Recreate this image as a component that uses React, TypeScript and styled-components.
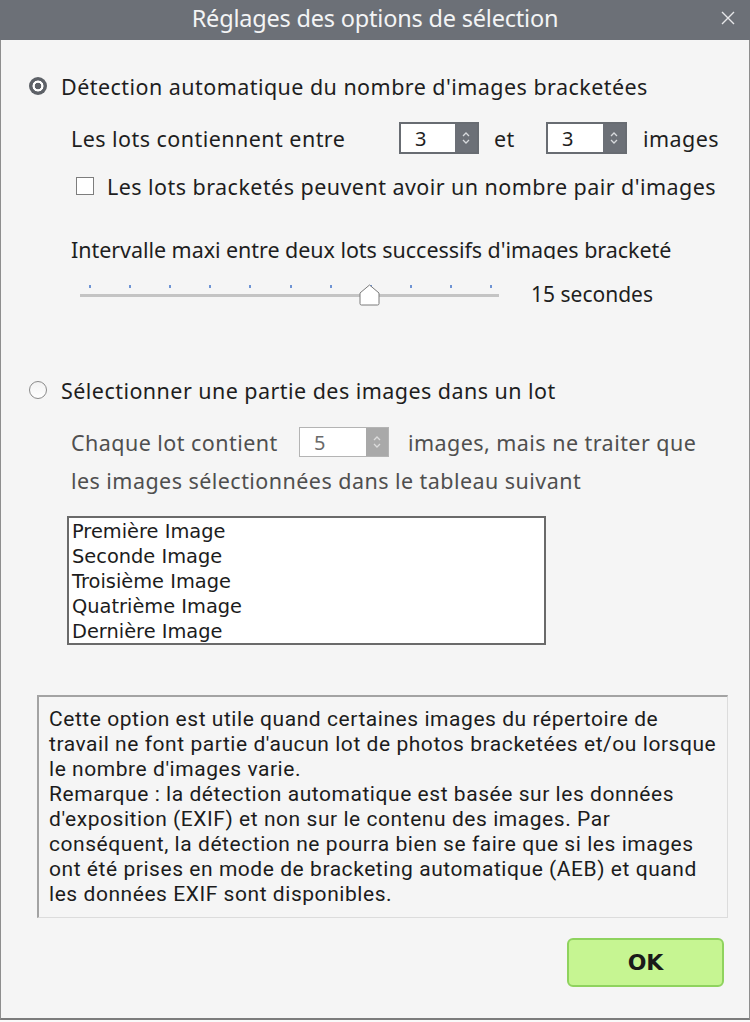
import { FC } from 'react';
import styled, { createGlobalStyle } from 'styled-components';

const GlobalStyle = createGlobalStyle`
	html, body {
		margin: 0;
		padding: 0;
		background: #fafafa;
	}
	body {
		font-family: 'Noto Sans', 'Open Sans', sans-serif;
		color: #1e1e1e;
	}
`;

const TICKS = 11;
const TICK_START = 9;
const TICK_STEP = 40.1;
const SLIDER_VALUE = 7;

const listItems = ['Première Image', 'Seconde Image', 'Troisième Image', 'Quatrième Image', 'Dernière Image'];

const infoLines = [
	"Cette option est utile quand certaines images du répertoire de",
	"travail ne font partie d'aucun lot de photos bracketées et/ou lorsque",
	"le nombre d'images varie.",
	"Remarque : la détection automatique est basée sur les données",
	"d'exposition (EXIF) et non sur le contenu des images. Par",
	"conséquent, la détection ne pourra bien se faire que si les images",
	"ont été prises en mode de bracketing automatique (AEB) et quand",
	"les données EXIF sont disponibles.",
];

const Chevrons: FC<{ color: string }> = ({ color }) => (
	<svg width="10" height="16" viewBox="0 0 10 16">
		<path d="M2 6 L5 3 L8 6" fill="none" stroke={color} strokeWidth="1.3" />
		<path d="M2 10 L5 13 L8 10" fill="none" stroke={color} strokeWidth="1.3" />
	</svg>
);

const Spinner: FC<{ value: number; width: number; disabled?: boolean }> = ({ value, width, disabled }) => (
	<SpinBox $disabled={disabled} style={{ width }}>
		<SpinValue $disabled={disabled}>{value}</SpinValue>
		<SpinArrows $disabled={disabled}>
			<Chevrons color={disabled ? '#dcdcdc' : '#d8dadd'} />
		</SpinArrows>
	</SpinBox>
);

export default function App() {
	return (
		<>
			<GlobalStyle />
			<Window>
				<TitleBar>
					<Title>Réglages des options de sélection</Title>
					<CloseButton aria-label="Fermer">
						<svg width="14" height="14" viewBox="0 0 14 14">
							<path d="M1 1 L13 13 M13 1 L1 13" stroke="#e6e7e9" strokeWidth="1.4" />
						</svg>
					</CloseButton>
				</TitleBar>
				<Body>
					<RadioRow $top={32}>
						<Radio $checked />
						<Label>Détection automatique du nombre d'images bracketées</Label>
					</RadioRow>

					<FieldRow $top={22} $height={32} $indent={70}>
						<Label $width={328}>Les lots contiennent entre</Label>
						<Spinner value={3} width={80} />
						<Label $width={67} $pad={15}>
							et
						</Label>
						<Spinner value={3} width={81} />
						<Label $pad={16}>images</Label>
					</FieldRow>

					<FieldRow $top={22} $height={20} $indent={75}>
						<CheckBox />
						<Label $pad={13}>Les lots bracketés peuvent avoir un nombre pair d'images</Label>
					</FieldRow>

					<ClippedLabel>Intervalle maxi entre deux lots successifs d'images bracketé</ClippedLabel>

					<FieldRow $top={21} $height={28} $indent={79}>
						<SliderTrack>
							{Array.from({ length: TICKS }).map((_, i) => (
								<Tick key={i} style={{ left: TICK_START + TICK_STEP * i }} />
							))}
							<Thumb style={{ left: TICK_START + TICK_STEP * SLIDER_VALUE - 10.5 }}>
								<svg width="21" height="22" viewBox="0 0 21 22">
									<path
										d="M1 9 L10.5 1 L20 9 V19.5 Q20 21 18.5 21 H2.5 Q1 21 1 19.5 Z"
										fill="#ffffff"
										stroke="#7a7a7a"
										strokeWidth="1"
									/>
								</svg>
							</Thumb>
						</SliderTrack>
						<SliderValue>15 secondes</SliderValue>
					</FieldRow>

					<RadioRow $top={68}>
						<Radio />
						<Label>Sélectionner une partie des images dans un lot</Label>
					</RadioRow>

					<FieldRow $top={23} $height={30} $indent={70}>
						<Label $width={228} $muted>
							Chaque lot contient
						</Label>
						<Spinner value={5} width={90} disabled />
						<Label $pad={19} $muted>
							images, mais ne traiter que
						</Label>
					</FieldRow>

					<FieldRow $top={11} $height={24} $indent={70}>
						<Label $muted>les images sélectionnées dans le tableau suivant</Label>
					</FieldRow>

					<ListBox>
						{listItems.map((item) => (
							<ListItem key={item}>{item}</ListItem>
						))}
					</ListBox>

					<InfoBox>
						{infoLines.map((line, idx) => (
							<InfoLine key={idx}>{line}</InfoLine>
						))}
					</InfoBox>

					<ButtonRow>
						<OkButton>OK</OkButton>
					</ButtonRow>
				</Body>
			</Window>
		</>
	);
}

const Window = styled.div`
	width: 750px;
	height: 1022px;
	display: flex;
	flex-direction: column;
	overflow: hidden;
`;

const TitleBar = styled.div`
	flex: none;
	height: 40px;
	display: grid;
	grid-template-columns: 1fr auto 1fr;
	align-items: center;
	background: #6c7077;
`;

const Title = styled.div`
	grid-column: 2;
	font-size: 23.5px;
	color: #f3f4f5;
	letter-spacing: -0.2px;
	padding-bottom: 4px;
`;

const CloseButton = styled.button`
	grid-column: 3;
	justify-self: end;
	margin-right: 15px;
	margin-bottom: 4px;
	padding: 0;
	border: none;
	background: none;
	display: flex;
`;

const Body = styled.div`
	flex: 1;
	display: flex;
	flex-direction: column;
	background: #f5f5f5;
	border-left: 1px solid #8e8e8e;
	border-right: 1px solid #8e8e8e;
	border-bottom: 2px solid #7c7c7c;
	margin-bottom: 2px;
`;

const RadioRow = styled.div<{ $top: number }>`
	display: flex;
	align-items: center;
	gap: 14px;
	height: 28px;
	margin-top: ${({ $top }) => $top}px;
	padding-left: 28px;
`;

const Radio = styled.span<{ $checked?: boolean }>`
	flex: none;
	width: 18px;
	height: 18px;
	border-radius: 50%;
	box-sizing: border-box;
	background: ${({ $checked }) =>
		$checked
			? 'radial-gradient(circle, #5d6167 0 3px, #ffffff 3.6px 5.2px, #5d6167 5.8px)'
			: 'linear-gradient(#f2f2f2, #ffffff)'};
	border: ${({ $checked }) => ($checked ? 'none' : '1.5px solid #8a8a8a')};
`;

const CheckBox = styled.span`
	flex: none;
	width: 18px;
	height: 18px;
	box-sizing: border-box;
	border: 1.5px solid #7d7d7d;
	background: #ffffff;
`;

const FieldRow = styled.div<{ $top: number; $height: number; $indent: number }>`
	display: flex;
	align-items: center;
	height: ${({ $height }) => $height}px;
	margin-top: ${({ $top }) => $top}px;
	padding-left: ${({ $indent }) => $indent}px;
`;

const Label = styled.span<{ $width?: number; $pad?: number; $muted?: boolean }>`
	flex: none;
	box-sizing: border-box;
	font-size: 21.5px;
	letter-spacing: 0.45px;
	white-space: nowrap;
	color: ${({ $muted }) => ($muted ? '#4f4f4f' : '#1e1e1e')};
	width: ${({ $width }) => ($width ? `${$width}px` : 'auto')};
	padding-left: ${({ $pad }) => $pad || 0}px;
`;

const ClippedLabel = styled.div`
	margin-top: 41px;
	padding-left: 70px;
	height: 22px;
	line-height: 26px;
	overflow: hidden;
	font-size: 21.5px;
	letter-spacing: -0.05px;
	white-space: nowrap;
`;

const SpinBox = styled.div<{ $disabled?: boolean }>`
	flex: none;
	height: 100%;
	box-sizing: border-box;
	display: flex;
	background: #ffffff;
	border: ${({ $disabled }) => ($disabled ? '1.5px solid #b4b4b4' : '2px solid #686c72')};
`;

const SpinValue = styled.span<{ $disabled?: boolean }>`
	flex: 1;
	display: flex;
	align-items: center;
	padding-left: 14px;
	font-size: 20px;
	color: ${({ $disabled }) => ($disabled ? '#6a6a6a' : '#1e1e1e')};
`;

const SpinArrows = styled.span<{ $disabled?: boolean }>`
	flex: none;
	width: 22px;
	display: flex;
	align-items: center;
	justify-content: center;
	background: ${({ $disabled }) => ($disabled ? '#a9a9a9' : '#6c7077')};
`;

const SliderTrack = styled.div`
	position: relative;
	flex: none;
	width: 419px;
	height: 100%;
	&::before {
		content: '';
		position: absolute;
		left: 0;
		right: 0;
		top: 14px;
		height: 3px;
		background: #c4c4c4;
	}
`;

const Tick = styled.span`
	position: absolute;
	top: 5px;
	width: 2px;
	height: 3px;
	background: #6f94d4;
`;

const Thumb = styled.span`
	position: absolute;
	top: 4px;
	display: flex;
`;

const SliderValue = styled.span`
	margin-left: 32px;
	font-size: 21px;
	color: #1e1e1e;
`;

const ListBox = styled.div`
	margin-top: 24px;
	margin-left: 66px;
	width: 479px;
	height: 129px;
	box-sizing: border-box;
	border: 2px solid #6a6a6a;
	background: #ffffff;
	padding: 1px 3px;
	font-family: 'DejaVu Sans', Verdana, sans-serif;
	font-size: 19.4px;
	line-height: 25px;
	color: #1c1c1c;
	overflow: hidden;
`;

const ListItem = styled.div`
	white-space: nowrap;
`;

const InfoBox = styled.div`
	margin-top: 50px;
	margin-left: 36px;
	width: 691px;
	height: 223px;
	box-sizing: border-box;
	border: 1px solid #dcdcdc;
	border-top: 2px solid #a3a3a3;
	border-left: 2px solid #a3a3a3;
	padding: 10px 0 0 10px;
	font-family: Roboto, 'Noto Sans', sans-serif;
	font-size: 21px;
	line-height: 25px;
	letter-spacing: 0.55px;
	color: #1c1c1c;
	overflow: hidden;
`;

const InfoLine = styled.div`
	white-space: nowrap;
`;

const ButtonRow = styled.div`
	display: flex;
	justify-content: flex-end;
	margin-top: 20px;
	padding-right: 25px;
`;

const OkButton = styled.button`
	width: 157px;
	height: 49px;
	box-sizing: border-box;
	border: 2px solid #8fd35e;
	border-radius: 6px;
	background: #c6f592;
	font-family: 'DejaVu Sans', Verdana, sans-serif;
	font-weight: 700;
	font-size: 22px;
	color: #1a1a1a;
	cursor: pointer;
`;
